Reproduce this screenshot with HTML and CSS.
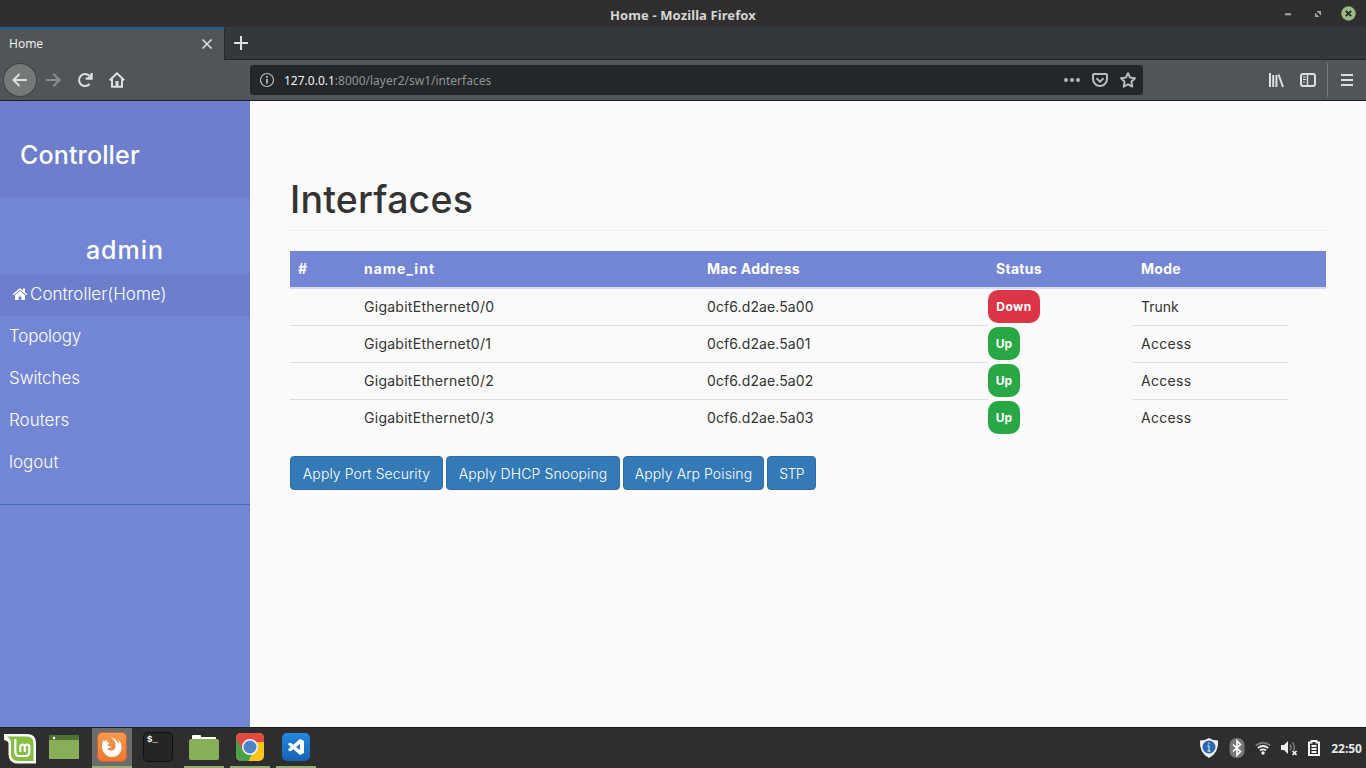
FILE: index.html
```html
<!DOCTYPE html>
<html lang="en">
<head>
<meta charset="utf-8">
<title>Home</title>
<link rel="stylesheet" href="styles.css">
</head>
<body>
<div class="desktop">
  <header class="titlebar">
    <span class="window-title">Home - Mozilla Firefox</span>
    <div class="window-controls">
      <svg width="10" height="10"><path d="M2 5.3h6" stroke="#a8a8a8" stroke-width="2"/></svg>
      <svg width="10" height="10" fill="#a8a8a8"><path d="M3.500 2H8v4.500zM2 3.800L6.300 8H2z"/></svg>
      <svg width="15" height="15"><circle cx="7.500" cy="7.500" r="7.200" fill="#9bb981"/><path d="M4.800 4.800l5.400 5.400M10.200 4.800l-5.400 5.400" stroke="#252b20" stroke-width="1.800"/></svg>
    </div>
  </header>
  <div class="tabbar">
    <div class="tab"><span>Home</span>
      <svg width="12" height="12"><path d="M1.500 1.500l9 9M10.500 1.500l-9 9" stroke="#d9dbdb" stroke-width="1.700"/></svg>
    </div>
    <svg class="new-tab" width="14" height="14"><path d="M7 0v14M0 7h14" stroke="#dfe1e1" stroke-width="2"/></svg>
  </div>
  <div class="toolbar">
    <div class="nav-buttons">
      <span class="back"><svg width="16" height="16" viewBox="0 0 16 16" class="line"><path d="M15 8H1.500M7.500 2l-6 6 6 6"/></svg></span>
      <svg width="16" height="16" viewBox="0 0 16 16" class="line dim"><path d="M1 8h13.500M8.500 2l6 6-6 6"/></svg>
      <svg width="16" height="16" viewBox="0 0 16 16" class="line"><path d="M12.600 12A6 6 0 1 1 12.500 4"/><path d="M15.500 1v6.500H9z" fill="#dddede" stroke="none"/><path d="M8.500 6.500h6V1"/></svg>
      <svg width="16" height="16" viewBox="0 0 16 16" class="line"><path d="M.700 8.300L8 1.300l7.300 7"/><path d="M3 7v7.800h10V7"/><path d="M8 9v5" stroke-width="3"/></svg>
    </div>
    <div class="urlbar">
      <svg width="16" height="16" viewBox="0 0 16 16" fill="none" stroke="#b9bbbc" stroke-width="1.200"><circle cx="8" cy="8" r="6.500"/><path d="M8 7v4.500M8 4v1.800" stroke-width="1.800"/></svg>
      <span class="url"><b>127.0.0.1</b>:8000/layer2/sw1/interfaces</span>
      <div class="page-actions">
        <svg width="16" height="16" fill="#b9bbbc"><circle cx="2" cy="8" r="2"/><circle cx="8" cy="8" r="2"/><circle cx="14" cy="8" r="2"/></svg>
        <svg width="16" height="16" class="line soft"><path d="M2 2h12q1 0 1 1v4a7 7 0 0 1-14 0V3q0-1 1-1z"/><path d="M4.500 6.300L8 9.700l3.500-3.400"/></svg>
        <svg width="16" height="16" class="line soft"><path d="M8 1.200l2.100 4.400 4.800.700-3.500 3.400.900 4.900L8 12.300l-4.300 2.300.9-4.900L1.100 6.300l4.800-.7z" stroke-linejoin="round"/></svg>
      </div>
    </div>
    <div class="tool-icons">
      <svg width="16" height="16" class="line"><path d="M2 1v14M5.200 3v12M8.400 3v12M10.500 2.500L15 15"/></svg>
      <svg width="16" height="16" class="line"><rect x="1" y="2" width="14" height="12" rx="2"/><path d="M7.500 2v12" stroke-width="1.400"/><path d="M3 5h3M3 7.500h3M3 10h2" stroke-width="1"/></svg>
    </div>
    <div class="menu"><svg width="14" height="14" class="line"><path d="M1 2h12M1 7h12M1 12h12"/></svg></div>
  </div>

  <div class="page">
    <aside class="sidebar">
      <div class="brand">Controller</div>
      <div class="user">admin</div>
      <nav>
        <a class="active"><svg width="16" height="14" viewBox="0 0 16 14" fill="#fff"><path d="M8 1L.5 7.300l.900 1L8 2.900l6.600 5.400.9-1-2.500-2.100V1.500h-2V3.500z"/><path d="M8 4L3 8.200V13h3.700V9.400h2.600V13H13V8.200z"/></svg><span>Controller(Home)</span></a>
        <a class="n-top">Topology</a>
        <a class="n-sw">Switches</a>
        <a>Routers</a>
        <a>logout</a>
      </nav>
    </aside>
    <main class="content">
      <h1>Interfaces</h1>
      <table>
        <colgroup><col class="c-num"><col class="c-name"><col class="c-mac"><col class="c-status"><col class="c-mode"><col></colgroup>
        <thead><tr><th>#</th><th class="h-name">name_int</th><th>Mac Address</th><th>Status</th><th>Mode</th><th></th></tr></thead>
        <tbody>
          <tr><td></td><td class="name">GigabitEthernet0/0</td><td class="mac">0cf6.d2ae.5a00</td><td class="status"><span class="pill down">Down</span></td><td>Trunk</td></tr>
          <tr><td></td><td class="name">GigabitEthernet0/1</td><td class="mac">0cf6.d2ae.5a01</td><td class="status"><span class="pill">Up</span></td><td class="access">Access</td></tr>
          <tr><td></td><td class="name">GigabitEthernet0/2</td><td class="mac">0cf6.d2ae.5a02</td><td class="status"><span class="pill">Up</span></td><td class="access">Access</td></tr>
          <tr><td></td><td class="name">GigabitEthernet0/3</td><td class="mac">0cf6.d2ae.5a03</td><td class="status"><span class="pill">Up</span></td><td class="access">Access</td></tr>
        </tbody>
      </table>
      <div class="buttons">
        <button class="b-port">Apply Port Security</button>
        <button class="b-dhcp">Apply DHCP Snooping</button>
        <button class="b-arp">Apply Arp Poising</button>
        <button class="b-stp">STP</button>
      </div>
    </main>
  </div>

  <footer class="panel">
    <div class="mint"><svg width="32" height="30" viewBox="0 0 32 30"><path d="M0 0h23q9 0 9 9v20.500H14Q4.500 29.500 4.500 20V9.500Q4.500 7 0 6z" fill="#f6f8f2"/><path d="M3 2.500h19.500q7 0 7 7V27H14.500Q7 27 7 19.500V9Q7 4.500 3 2.500z" fill="#86be43"/><path d="M11.300 5v13q0 4 4 4h6q4 0 4-4v-5.500a2.300 2.300 0 0 0-4.500 0V18M20.800 12.500a2.300 2.300 0 0 0-4.500 0V18" fill="none" stroke="#fff" stroke-width="2.200"/></svg></div>
    <div class="task"><svg width="30" height="24"><rect width="30" height="24" rx="1" fill="#88ae59"/><path d="M0 0h30v5H0z" fill="#527037"/><circle cx="5" cy="3" r="1.200" fill="#fff"/></svg></div>
    <div class="task current running"><svg width="30" height="30" viewBox="0 0 30 30"><defs><linearGradient id="fx" x2="0" y2="1"><stop stop-color="#f49b52"/><stop offset="1" stop-color="#f0752f"/></linearGradient></defs><rect x=".5" y=".5" width="29" height="29" rx="5" fill="url(#fx)" stroke="#c96730"/><path d="M6.500 8q-3 6-.5 11 3 6 9 6 7 0 9.300-7Q26 12 21 7.500q1.500 3 .8 5Q20 7 14 5.500q4 3 4.500 7 .5 6-4.500 6-3 0-4-2 3 .5 4.500-2-3 .5-4-2 2-.5 2-1.800l-3-.7q.5-1.500 1.500-2-2 0-3 1Q6.500 9 6.500 8z" fill="#fff"/></svg></div>
    <div class="task"><div class="terminal">$<i>_</i></div></div>
    <div class="task running"><svg width="30" height="26"><path d="M3 6V2q0-1 1-1h7q1 0 1 1v1h14q1 0 1 1v3H3z" fill="#fff"/><rect y="5" width="30" height="21" rx="2" fill="#88ae59"/></svg></div>
    <div class="task running"><svg width="30" height="30" viewBox="0 0 30 30"><defs><clipPath id="sq"><rect x="1" y="1" width="28" height="28" rx="5"/></clipPath></defs><g clip-path="url(#sq)"><path fill="#fac51c" d="M0 0h30v30H0z"/><path fill="#e04a3f" d="M0 0h30v10H15l-8 9L0 6z"/><path fill="#4a9f48" d="M0 5l8 13 9 4-4 8H0z"/></g><circle cx="15" cy="15" r="8" fill="#f2f4f6"/><circle cx="15" cy="15" r="6.500" fill="#4c84cb"/></svg></div>
    <div class="task running"><svg width="30" height="30" viewBox="0 0 30 30"><defs><linearGradient id="vs" x2="0" y2="1"><stop stop-color="#2189df"/><stop offset="1" stop-color="#1761b6"/></linearGradient></defs><rect x="1" y="1" width="28" height="28" rx="5" fill="url(#vs)"/><path d="M19 7l4 2v12l-4 2L7.500 13q-.800-.7 0-1.500l1-.8 1.500.2L19 18v-6l-9 7-1.500.3-1-.8q-.8-.8 0-1.500z" fill="#fff"/></svg></div>
    <div class="tray">
      <svg width="20" height="22" viewBox="0 0 20 22"><path d="M10 1q4 2.500 9 2.500Q20 16 10 21 0 16 1 3.500 6 3.500 10 1z" fill="#f0f1f2"/><circle cx="10" cy="10" r="6.500" fill="#2a68ad"/><path d="M10 9v5M8.500 9H10M8.500 14h3M10 5.500v2" stroke="#b9d5f2" stroke-width="1.300"/></svg>
      <svg width="16" height="20" viewBox="0 0 16 20"><rect x=".5" width="15" height="20" rx="7" fill="#777"/><path d="M4 6.500l7.500 7L8 17V3l3.500 3.500-7.500 7" fill="none" stroke="#fff" stroke-width="1.600"/></svg>
      <svg width="16" height="14" viewBox="0 0 16 14" fill="none" stroke-width="1.800"><path d="M.8 4.500q7.200-5.500 14.400 0" stroke="#777"/><path d="M2.800 7q5.200-4 10.400 0M5 9.500q3-2.300 6 0" stroke="#f0f0f0"/><circle cx="8" cy="12" r="1.700" fill="#f0f0f0"/></svg>
      <svg width="17" height="16" viewBox="0 0 17 16"><path d="M0 5h3l4-4v13l-4-4H0z" fill="#eee"/><path d="M9 4.500q2 3 0 6M11.500 2.500q3 4 1 8" fill="none" stroke="#777" stroke-width="1.500"/><path d="M11.500 11l4 4M15.500 11l-4 4" stroke="#fff" stroke-width="1.700"/></svg>
      <svg width="12" height="16" viewBox="0 0 12 16"><path d="M3.500 2.500V1h5v1.500H11V15H1V2.500z" fill="none" stroke="#f2f2f2" stroke-width="2"/><path d="M3.500 6h5M3.500 9h5M3.500 12h5" stroke="#f2f2f2" stroke-width="1.800"/></svg>
      <span class="clock">22:50</span>
    </div>
  </footer>
</div>
</body>
</html>
```
FILE: styles.css
```css
* { box-sizing: border-box; }
body { margin: 0; font-family: "Noto Sans", sans-serif; }
svg { display: block; flex: none; }
.line { fill: none; stroke: #dddede; stroke-width: 2; }
.line.dim { stroke: #8b8f91; }
.line.soft { stroke: #b9bbbc; }
.desktop { width: 1366px; height: 768px; display: flex; flex-direction: column; overflow: hidden; }
.titlebar { height: 27px; background: #2f2f2f; display: grid; grid-template-columns: 1fr auto 1fr; align-items: center; }
.window-title { grid-column: 2; font-size: 13px; font-weight: 700; color: #d6d6d6; padding-top: 2px; letter-spacing: .1px; }
.window-controls { display: flex; justify-content: flex-end; align-items: center; gap: 20px; padding-right: 10px; }
.window-controls svg:last-child { margin-left: -2px; }
.tabbar { height: 33px; background: #33393b; border-bottom: 1px solid #232729; display: flex; }
.tab { width: 225px; height: 33px; background: #505658; border-top: 2px solid #215d9c; border-right: 1px solid #24292b; display: flex; align-items: center; justify-content: space-between; padding: 0 11px 0 9px; font-size: 12px; color: #eee; }
.tab span { padding-bottom: 3px; }
.tab svg { margin-bottom: 1px; }
.new-tab { margin: 9px 0 0 9px; }
.toolbar { height: 41px; background: #505658; border-bottom: 1px solid #1b1d26; display: flex; align-items: center; }
.nav-buttons { width: 250px; padding-left: 4px; display: flex; align-items: center; gap: 16px; }
.back { width: 32px; height: 32px; border-radius: 50%; background: #747978; box-shadow: 0 0 0 1px #3e4345; display: grid; place-items: center; margin-right: -7px; }
.urlbar { width: 893px; height: 30px; border-radius: 3px; background: #232729; display: flex; align-items: center; padding: 0 7px 0 9px; }
.url { font-size: 12px; color: #929495; margin-left: 9px; }
.url b { font-weight: 400; color: #f2f2f2; }
.page-actions { display: flex; gap: 12px; margin-left: auto; }
.tool-icons { display: flex; gap: 16px; margin-left: 125px; }
.menu { height: 34px; margin-left: 11px; padding-left: 12px; border-left: 1px solid #74797b; display: flex; align-items: center; }

.page { height: 626px; display: flex; background: #fafafa; font-family: Inter, sans-serif; }
.sidebar { width: 250px; background: #7386d5; color: #fff; }
.brand { height: 96px; background: #6d7fcc; padding: 38px 20px 0; font-size: 25px; line-height: 32px; font-weight: 500; letter-spacing: .15px; }
.user { height: 77px; padding-top: 39px; text-align: center; font-size: 25px; line-height: 28px; font-weight: 500; letter-spacing: 1px; }
nav { height: 231px; border-bottom: 1px solid #476eab; }
nav a { height: 42px; display: flex; align-items: center; padding: 0 10px 2px 9px; font-size: 17px; font-weight: 300; }
nav .active { background: #6d7fcc; padding-left: 12px; gap: 2px; }
.n-top { letter-spacing: -.2px; }
.n-sw { letter-spacing: -.1px; }
.content { flex: 1; padding: 75px 40px 0; color: #333; }
h1 { margin: 0; height: 55px; padding-top: 2px; border-bottom: 1px solid #eee; font-size: 37.5px; line-height: 44px; font-weight: 500; letter-spacing: .2px; }
table { width: 1036px; margin-top: 20px; table-layout: fixed; border-spacing: 0; font-size: 14px; line-height: 20px; }
.c-num { width: 66px; } .c-name { width: 343px; } .c-mac { width: 289px; } .c-status { width: 145px; } .c-mode { width: 155px; }
th { height: 38px; padding: 0 8px; text-align: left; background: #7386d5; color: #fff; border-bottom: 2px solid #d6dcf0; background-clip: padding-box; letter-spacing: .27px; }
.h-name { letter-spacing: 1.1px; }
td { height: 37px; padding: 0 8px; border-bottom: 1px solid #ddd; }
td.name { letter-spacing: .27px; }
td.mac { letter-spacing: .1px; }
td.access { letter-spacing: .3px; }
tr:last-child td { border-bottom-color: transparent; }
td.status { padding: 1px 0 0; border-bottom: 0; vertical-align: top; }
.pill { display: block; width: 32px; height: 33px; border-radius: 10px; background: #28a745; color: #fff; font-size: 12px; line-height: 33px; font-weight: 700; text-align: center; }
.pill.down { width: 52px; background: #dc3545; letter-spacing: .5px; }
.buttons { display: flex; gap: 3px; margin-top: 19px; }
button { height: 34px; padding: 0; border: 1px solid #2e6da4; border-radius: 4px; background: #337ab7; color: #fff; font: 300 14px Inter, sans-serif; letter-spacing: .1px; white-space: nowrap; }
.b-port { width: 153px; } .b-dhcp { width: 174px; } .b-arp { width: 141px; } .b-stp { width: 49px; letter-spacing: -.7px; }

.panel { height: 41px; background: #2e2e2e; border-top: 1px solid #1d1d1d; display: flex; align-items: stretch; }
.mint { width: 41px; padding: 6px 0 0 4px; }
.task { width: 40px; margin: 0 3px; display: grid; place-items: center; border-bottom: 2px solid transparent; }
.task + .task { margin-left: 3px; }
.task.current { margin-left: 5px; }
.running { border-bottom-color: #93b072; }
.current { background: #6b6b6b; }
.terminal { width: 30px; height: 30px; border-radius: 5px; background: #252525; border: 1px solid #101010; color: #fff; font: 700 9px/12px "Liberation Mono", monospace; padding: 1px 3px; }
.terminal i { font-style: normal; }
.tray { margin-left: auto; display: flex; align-items: center; padding-right: 4px; gap: 10px; }
.clock { font-size: 12px; font-weight: 700; color: #e8e8e8; margin-left: 1px; }
```
